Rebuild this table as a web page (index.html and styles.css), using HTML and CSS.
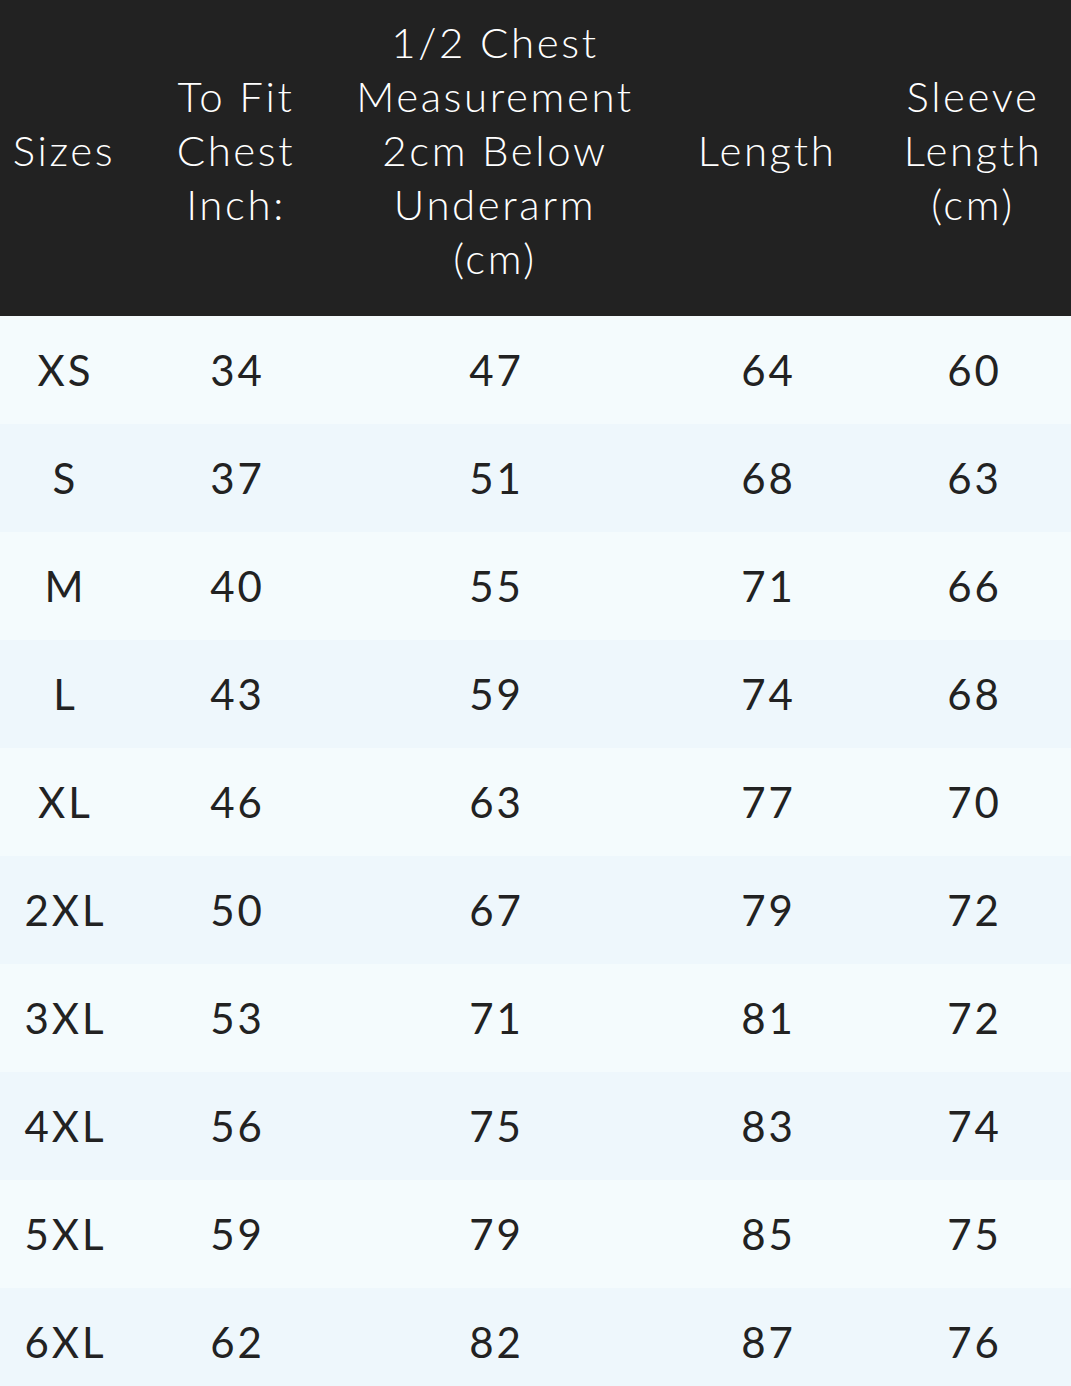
FILE: index.html
```html
<!DOCTYPE html>
<html>
<head>
<meta charset="utf-8">
<link rel="stylesheet" href="styles.css">
</head>
<body>
<table class="size-table">
  <colgroup>
    <col class="c1"><col class="c2"><col class="c3"><col class="c4"><col class="c5">
  </colgroup>
  <thead>
    <tr class="head">
      <th>Sizes</th>
      <th>To Fit<br>Chest<br>Inch:</th>
      <th>1/2 Chest<br>Measurement<br>2cm Below<br>Underarm<br>(cm)</th>
      <th>Length</th>
      <th class="last">Sleeve<br>Length<br>(cm)</th>
    </tr>
  </thead>
  <tbody>
    <tr class="odd"><td>XS</td><td>34</td><td>47</td><td>64</td><td class="last">60</td></tr>
    <tr class="even"><td>S</td><td>37</td><td>51</td><td>68</td><td class="last">63</td></tr>
    <tr class="odd"><td>M</td><td>40</td><td>55</td><td>71</td><td class="last">66</td></tr>
    <tr class="even"><td>L</td><td>43</td><td>59</td><td>74</td><td class="last">68</td></tr>
    <tr class="odd"><td>XL</td><td>46</td><td>63</td><td>77</td><td class="last">70</td></tr>
    <tr class="even"><td>2XL</td><td>50</td><td>67</td><td>79</td><td class="last">72</td></tr>
    <tr class="odd"><td>3XL</td><td>53</td><td>71</td><td>81</td><td class="last">72</td></tr>
    <tr class="even"><td>4XL</td><td>56</td><td>75</td><td>83</td><td class="last">74</td></tr>
    <tr class="odd"><td>5XL</td><td>59</td><td>79</td><td>85</td><td class="last">75</td></tr>
    <tr class="even"><td>6XL</td><td>62</td><td>82</td><td>87</td><td class="last">76</td></tr>
  </tbody>
</table>
</body>
</html>
```
FILE: styles.css
```css
html, body {
  margin: 0;
  padding: 0;
  background: #eef7fc;
  overflow: hidden;
}
.size-table {
  width: 1071px;
  table-layout: fixed;
  border-collapse: collapse;
  font-family: "Lato", "Open Sans", sans-serif;
  color: #222222;
}
.c1 { width: 128px; }
.c2 { width: 216px; }
.c3 { width: 302px; }
.c4 { width: 242px; }
.c5 { width: 183px; }
.head {
  background: #222222;
  height: 316px;
}
.head th {
  color: #ffffff;
  font-weight: 300;
  font-size: 42px;
  line-height: 54px;
  letter-spacing: 2.6px;
  text-align: center;
  vertical-align: middle;
  padding: 0 0 16px 0;
  white-space: nowrap;
}
.head th.last { padding-right: 13px; }
td {
  height: 108px;
  padding: 0;
  text-align: center;
  vertical-align: middle;
  font-size: 42px;
  font-weight: 400;
  letter-spacing: 3px;
  text-indent: 3px;
}
td.last { padding-right: 13px; }
.odd { background: #f4fbfd; }
.even { background: #eef7fc; }
```
